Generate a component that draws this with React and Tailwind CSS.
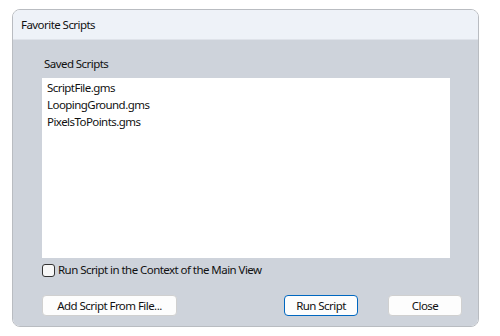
export default function App() {
  const scripts = ['ScriptFile.gms', 'LoopingGround.gms', 'PixelsToPoints.gms'];
  return (
    <div className="w-[500px] h-[336px] bg-white pt-[9px] pl-[12px]" style={{ fontFamily: '"Noto Sans", "Open Sans", sans-serif' }}>
      <div className="w-[467px] h-[318px] border border-[#b9bcc1] rounded-[8px] overflow-hidden flex flex-col text-[11.5px] tracking-[-0.55px] text-[#111]">
        <div className="h-[30px] shrink-0 bg-[#eef2f8] flex items-center pl-[8px] border-b border-[#dfe3ea]">
          Favorite Scripts
        </div>
        <div className="flex-1 bg-[#ced3db] pl-[29px] pr-[28px] flex flex-col">
          <div className="h-[38px] flex items-end pb-[6px] pl-[2px]">Saved Scripts</div>
          <div className="h-[180px] bg-white pt-[1px] pl-[5px] flex flex-col">
            {scripts.map(s => (
              <div key={s} className="h-[17px] leading-[17px]">{s}</div>
            ))}
          </div>
          <label className="flex items-center gap-[3px] mt-[5px] h-[14px]">
            <span className="w-[13px] h-[13px] rounded-[3px] border border-[#333] bg-[#f7f7f7]" />
            <span>Run Script in the Context of the Main View</span>
          </label>
          <div className="flex items-center mt-[18px] mr-[-12px]">
            <button className="w-[135px] h-[21px] bg-[#fdfdfd] border border-[#d0d0d0] rounded-[4px]">Add Script From File...</button>
            <button className="ml-auto w-[74px] h-[21px] bg-[#fdfdfd] border border-[#0067c0] rounded-[4px]">Run Script</button>
            <button className="ml-[30px] w-[74px] h-[21px] bg-[#fdfdfd] border border-[#d0d0d0] rounded-[4px]">Close</button>
          </div>
        </div>
      </div>
    </div>
  );
}
